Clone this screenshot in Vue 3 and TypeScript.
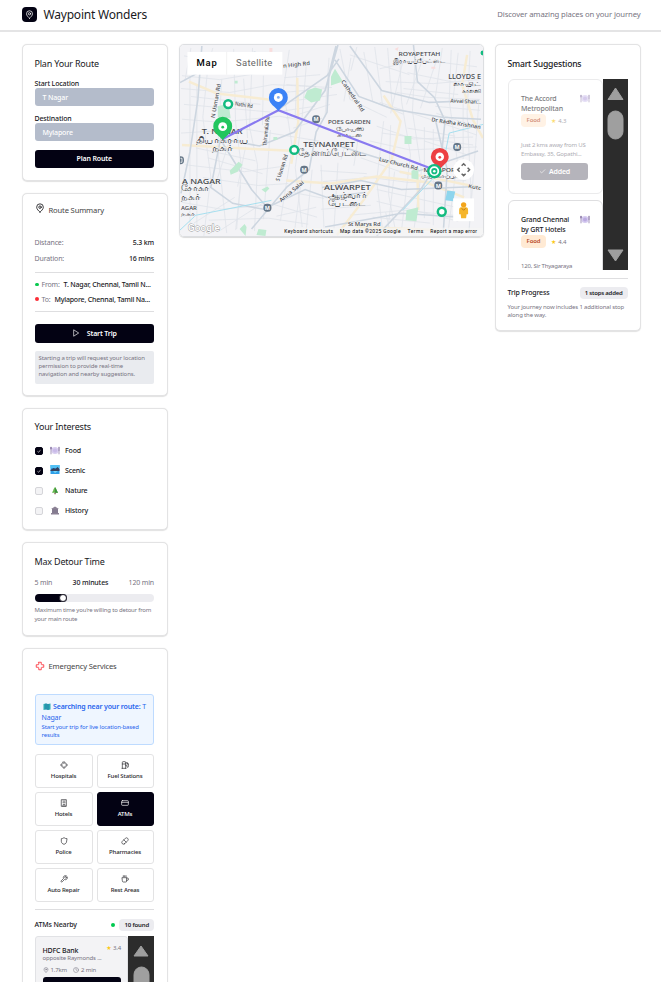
<script setup lang="ts">
import { ref } from 'vue'

interface Interest {
  id: string
  label: string
  checked: boolean
}

interface Service {
  label: string
  paths: string[]
}

interface MapLabel {
  text: string
  x: number
  y: number
  width: number
  size: number
  rotate?: number
}

const interests = ref<Interest[]>([
  { id: 'food', label: 'Food', checked: true },
  { id: 'scenic', label: 'Scenic', checked: true },
  { id: 'nature', label: 'Nature', checked: false },
  { id: 'history', label: 'History', checked: false },
])

const detour = ref(30)
const activeService = ref('ATMs')

const services: Service[] = [
  { label: 'Hospitals', paths: ['M9 3h6v5l1 1h5v6h-5l-1 1v5H9v-5l-1-1H3V9h5l1-1z'] },
  { label: 'Fuel Stations', paths: ['M3 22h12M4 9h10M14 22V4a2 2 0 0 0-2-2H6a2 2 0 0 0-2 2v18', 'M14 13h2a2 2 0 0 1 2 2v2a2 2 0 0 0 4 0V9.8L18 5M14 6h7v5'] },
  { label: 'Hotels', paths: ['M5 2h14v20H5z', 'M9 22v-5h6v5M9 6h.1M15 6h.1M9 11h.1M15 11h.1M12 6v6'] },
  { label: 'ATMs', paths: ['M4 5h16a2 2 0 0 1 2 2v10a2 2 0 0 1-2 2H4a2 2 0 0 1-2-2V7a2 2 0 0 1 2-2z', 'M2 10h20'] },
  { label: 'Police', paths: ['M20 13c0 5-3.500 7.500-8 9-4.500-1.500-8-4-8-9V5c3 0 5-1 8-3 3 2 5 3 8 3z'] },
  { label: 'Pharmacies', paths: ['m10.500 20.500 10-10a5 5 0 0 0-7-7l-10 10a5 5 0 0 0 7 7z', 'm8.500 8.500 7 7'] },
  { label: 'Auto Repair', paths: ['M14.700 6.300a1 1 0 0 0 0 1.400l1.600 1.600a1 1 0 0 0 1.400 0l3.800-3.800a6 6 0 0 1-8 8l-6.900 6.900a2 2 0 0 1-3-3l6.900-6.900a6 6 0 0 1 8-8z'] },
  { label: 'Rest Areas', paths: ['M4 8h13v10a3 3 0 0 1-3 3H7a3 3 0 0 1-3-3z', 'M17 9h2a3 3 0 0 1 0 7h-2M7 2v3M11 2v3M15 2v3'] },
]

const suggestions = [
  { name: ['The Accord', 'Metropolitan'], rating: '4.3', address: ['Just 2 kms away from US', 'Embassy, 35, Gopathi...'], added: true },
  { name: ['Grand Chennai', 'by GRT Hotels'], rating: '4.4', address: ['120, Sir Thyagaraya'], added: false },
]

const mapLabels: MapLabel[] = [
  { text: 'T. NAGAR', x: 201, y: 134, width: 41, size: 7 },
  { text: 'தியாகராய', x: 195, y: 143, width: 53, size: 9.5 },
  { text: 'நகர்', x: 211, y: 151.5, width: 22, size: 9.5 },
  { text: 'TEYNAMPET', x: 303, y: 147, width: 52, size: 8 },
  { text: 'தேனாம்பேட்டை', x: 298, y: 156, width: 68, size: 10 },
  { text: 'A NAGAR', x: 181, y: 184, width: 39, size: 7.5 },
  { text: 'சோகா', x: 180, y: 192, width: 29, size: 9 },
  { text: 'நகர்', x: 180, y: 200.5, width: 20, size: 9 },
  { text: 'AGAR', x: 180, y: 210.5, width: 16, size: 5.5 },
  { text: 'நகர்', x: 180, y: 217, width: 14, size: 6 },
  { text: 'ALWARPET', x: 324, y: 190.5, width: 47, size: 8 },
  { text: 'ஆழ்வார்', x: 328, y: 198.5, width: 39, size: 9.5 },
  { text: 'பேட்டை', x: 328, y: 206.5, width: 38, size: 9.5 },
  { text: 'POES GARDEN', x: 328, y: 124, width: 43, size: 5.5 },
  { text: 'போயஸ்', x: 336, y: 130.5, width: 28, size: 6.5 },
  { text: 'கார்டன்', x: 337, y: 136.5, width: 25, size: 6.5 },
  { text: 'ROYAPETTAH', x: 399, y: 55.5, width: 42, size: 5.5 },
  { text: 'இராயப்பேட்டை', x: 393, y: 62, width: 53, size: 7.5 },
  { text: 'LLOYDS E', x: 449, y: 78.5, width: 33, size: 7 },
  { text: 'லாயிட்', x: 454, y: 85.5, width: 28, size: 7.5 },
  { text: 'காலனி', x: 463, y: 92.5, width: 19, size: 7.5 },
  { text: 'n High Rd', x: 283, y: 67, width: 27, size: 5.5, rotate: -6 },
  { text: 'N Usman Rd', x: 214, y: 118, width: 35, size: 5.5, rotate: -80 },
  { text: 'Nathi Rd', x: 234, y: 105, width: 18, size: 5.5, rotate: 9 },
  { text: 'Thirumalai Rd', x: 266, y: 146, width: 30, size: 5.5, rotate: -84 },
  { text: 'S Usman Rd', x: 279, y: 182, width: 28, size: 5.5, rotate: -72 },
  { text: 'Anna Salai', x: 281, y: 203, width: 30, size: 5.5, rotate: -40 },
  { text: 'Cathedral Rd', x: 341, y: 81, width: 37, size: 5.5, rotate: 56 },
  { text: 'Luz Church Rd', x: 379, y: 161, width: 40, size: 5.5, rotate: 14 },
  { text: 'Dr Radha Krishnan', x: 432, y: 121, width: 50, size: 5.5, rotate: 9 },
  { text: 'Avvai Shan...', x: 451, y: 102, width: 31, size: 5.5, rotate: 3 },
  { text: 'St Marys Rd', x: 348, y: 227, width: 33, size: 5 },
  { text: 'MYLAPORE', x: 424, y: 172.5, width: 36, size: 5 },
  { text: 'மயிலாப்பூர்', x: 422, y: 178.500, width: 38, size: 6 },
  { text: 'Kutc', x: 469, y: 188, width: 13, size: 5, rotate: 12 },
]

const metros = [
  [316, 119], [304, 170], [267, 208.5], [179, 160.5], [458, 147], [439, 186],
]

const rings = [
  [227.5, 103.7], [294, 150], [442.5, 212.5],
]
</script>

<template>
  <div class="app">
    <header class="header">
      <div class="brand">
        <span class="logo">
          <svg viewBox="0 0 24 24" class="stroke"><path d="M12 22c3-3 8-7 8-12a8 8 0 0 0-16 0c0 5 5 9 8 12z" /><circle cx="12" cy="10" r="3" /></svg>
        </span>
        <h1>Waypoint Wonders</h1>
      </div>
      <p>Discover amazing places on your journey</p>
    </header>

    <main class="layout">
      <aside class="column">
        <section class="card plan">
          <h2>Plan Your Route</h2>
          <label>Start Location</label>
          <div class="input">T Nagar</div>
          <label>Destination</label>
          <div class="input second">Mylapore</div>
          <button class="primary">Plan Route</button>
        </section>

        <section class="card summary">
          <div class="title">
            <svg viewBox="0 0 24 24" class="stroke"><path d="M12 22c3-3 8-7 8-12a8 8 0 0 0-16 0c0 5 5 9 8 12z" /><circle cx="12" cy="10" r="3" /></svg>
            <span>Route Summary</span>
          </div>
          <div class="stat"><span>Distance:</span><b>5.3 km</b></div>
          <div class="stat"><span>Duration:</span><b>16 mins</b></div>
          <hr />
          <div class="place from"><i></i><span>From:</span><b>T. Nagar, Chennai, Tamil N...</b></div>
          <div class="place to"><i></i><span>To:</span><b>Mylapore, Chennai, Tamil Na...</b></div>
          <hr class="low" />
          <button class="primary start">
            <svg viewBox="0 0 24 24" class="stroke"><path d="M6 3l14 9-14 9z" /></svg>
            <span>Start Trip</span>
          </button>
          <p class="note">Starting a trip will request your location<br />permission to provide real-time<br />navigation and nearby suggestions.</p>
        </section>

        <section class="card interests">
          <h2>Your Interests</h2>
          <div v-for="item in interests" :key="item.id" class="interest" @click="item.checked = !item.checked">
            <span class="box" :class="{ checked: item.checked }">
              <svg v-if="item.checked" viewBox="0 0 8 8"><path d="M2 4.500l1.300 1L6 3" /></svg>
            </span>
            <svg v-if="item.id === 'food'" class="emoji" viewBox="0 0 10 9">
              <circle cx="5" cy="4.500" r="3.500" fill="#d8cdf0" /><circle cx="5" cy="4.500" r="2.100" fill="#c9bae8" />
              <path d="M1 .8v7.500M.4 1v2h1.200V1M9 .8v7.500M9 1v4" stroke="#8d7ba8" stroke-width=".8" fill="none" />
            </svg>
            <svg v-else-if="item.id === 'scenic'" class="emoji scenic-icon" viewBox="0 0 10 9">
              <path d="M.5 0h9v9h-9z" fill="#2d9fe8" /><path d="M.5 0h9v3h-9z" fill="#52c1f5" />
              <path d="M.5 5l3-2 2 .8 2-1.800 2 2V6h-9z" fill="#35405f" /><path d="M3 6h5L5 8z" fill="#77d4f6" />
            </svg>
            <svg v-else-if="item.id === 'nature'" class="emoji" viewBox="0 0 10 9">
              <path d="M5 1l1.700 2.500-.3.200L8 6.800H2l1.600-3.100-.3-.2z" fill="#63b64a" /><path d="M5 1l3 5.800H5z" fill="#3d9140" /><path d="M4.400 6.800h1.300v1.400H4.400z" fill="#785345" />
            </svg>
            <svg v-else class="emoji" viewBox="0 0 10 9">
              <path d="M5 .5L9 3H1zM1 7h8v1.400H1z" fill="#8c8295" /><path d="M2 3h6v4H2z" fill="#b5adbd" /><path d="M3 3v4M5 3v4M7 3v4" stroke="#554a62" stroke-width="1" />
            </svg>
            <span>{{ item.label }}</span>
          </div>
        </section>

        <section class="card detour">
          <h2>Max Detour Time</h2>
          <div class="range"><span>5 min</span><b>{{ detour }} minutes</b><span>120 min</span></div>
          <div class="track"><div class="fill" :style="{ width: 8 + ((detour - 5) / 115) * 90 + '%' }"><i></i></div></div>
          <p>Maximum time you're willing to detour from<br />your main route</p>
        </section>

        <section class="card emergency">
          <div class="title red">
            <svg viewBox="0 0 24 24" class="stroke"><path d="M9 3h6v5l1 1h5v6h-5l-1 1v5H9v-5l-1-1H3V9h5l1-1z" /></svg>
            <span>Emergency Services</span>
          </div>
          <div class="notice">
            <div>
              <svg viewBox="0 0 8 7"><path d="M.5 1L3 .5l2 .5 2.500-.5v6L5 7l-2-.5-2.500.5z" fill="#2caab4" /><path d="M3 .5v6M5 1v6" stroke="#246fa4" stroke-width=".7" /></svg>
              <b>Searching near your route:</b> T<br />Nagar
            </div>
            <p>Start your trip for live location-based<br />results</p>
          </div>
          <div class="services">
            <button v-for="s in services" :key="s.label" :class="{ active: s.label === activeService }" @click="activeService = s.label">
              <svg viewBox="0 0 24 24" class="stroke"><path v-for="p in s.paths" :key="p" :d="p" /></svg>
              <span>{{ s.label }}</span>
            </button>
          </div>
          <hr />
          <div class="nearby"><b>ATMs Nearby</b><i></i><span class="badge">10 found</span></div>
          <div class="results">
            <div class="bank">
              <div class="bank-head"><b>HDFC Bank</b><span><em>★</em> 3.4</span></div>
              <p>opposite Raymonds ...</p>
              <div class="meta">
                <svg viewBox="0 0 24 24" class="stroke"><path d="M12 22c3-3 8-7 8-12a8 8 0 0 0-16 0c0 5 5 9 8 12z" /><circle cx="12" cy="10" r="3" /></svg>
                <span>1.7km</span>
                <svg viewBox="0 0 24 24" class="stroke clock"><circle cx="12" cy="12" r="10" /><path d="M12 6v6l4 2" /></svg>
                <span>2 min</span>
              </div>
              <button class="primary">Add as Stop</button>
            </div>
            <div class="scrollbar">
              <svg viewBox="0 0 26 60"><path d="M13 10L20 20H6z" /><rect x="6" y="31" width="15" height="40" rx="7.500" /></svg>
            </div>
          </div>
        </section>
      </aside>

      <section class="map">
        <svg viewBox="179 44 305 193" preserveAspectRatio="none">
          <rect x="179" y="44" width="305" height="193" fill="#f3f3f6" />
          <g class="minor">
            <path d="M181 75l38 4 42-7M180 88l49 4 43-8 60 3M183 104l90 8 42-6M181 119l38 3 60-6 40 7M180 133l65-4 74 12M184 165l60 7 43-6M202 178l56 8 30-2M181 203l40 7 52-5 44 13M208 221l60-2 40 6M233 48l2 75 6 45-5 62M252 47l-3 80 8 38-3 67M207 67l-5 50 8 60-7 60M221 79l-4 70 9 85M289 49l-6 40 9 58-12 75M306 66l-4 50-7 52 7 60M340 48l10 51 37 18M364 51l9 50 31 13M380 68l40-9 58 7M386 81l48 2 46-4M397 92l33 5 51 2M377 126l37 13 60-2M370 141l40 9 68-3M364 177l46 6 57-2M350 216l55-5 67 7M400 49l2 52 9 54-9 76M416 50l-3 61 9 60-8 64M452 49l-2 51 8 60-9 72M471 50l-3 62 4 81-2 40M384 121l-7 60 6 51M391 125l-2 70 7 37" />
            <path d="M189 75v155M196 84v145M243 78l4 60M263 75l-1 50M270 130l-7 90M329 57l-4 60M351 57l-7 44M425 127v92M434 129v97M464 100v108M480 100l-10 132M321 165l3 65M338 163l-4 67M320 171l47 3M323 182l46-4M321 210l50-4M350 54l60 20M380 102l98 33M190 96l70 8M207 158l55 16M195 148l60 13M424 56l-17 48M437 60l-16 48M193 224l41-26M220 231l42-27M377 190l80 18M377 202l82 20M425 141l46 15" />
            <path d="M284 77l36-3M286 84l30 2M283 92l42-4M289 101l48-7M286 118l44-14M293 128l29-10M297 60l-2 55M302 174l-8 60M312 170l-6 62M287 192l37 7M276 217l40-9M346 142l-5 18M358 141l-4 25M361 158l48 17M382 133l92 12M373 218l58 6M386 213l5 22M395 172l-7 60M403 62l-12 51M357 46l-6 24M375 46l8 60M388 47l5 64M443 47l-7 50M459 52l-5 46M408 72l68 14M404 88l55 6M436 106l45 4M437 113l38 13M408 128l48 8M240 186l-5 45M228 143l-12 38M245 147l-8 40M183 55l28 5M190 47l-6 33M212 47l-7 27" />
          </g>
          <g class="yellow">
            <path d="M188 81l28 12 68 8M181 145l72 4 43 2M297 77l1 45-7 42M286 181l45 3 46-7 54 6M384 95l17 26-9 39-27 39-28 37M400 172l42 8 39 8M468 54l-5 30 11 36 10 18M356 228l82 3M427 183l38 15M418 176l1 35" />
          </g>
          <g class="roads">
            <path d="M179 82l33-18 43-13M201 45l-4 54-8 53-9 42M220 140l31 50 19 22M220 139l39 7 35-14 31-42 13-46M277 110l50-35 12-17M336 45l-7 28-2 39-11 20-7 38-22 17-36 43M221 133l-11 55 22 16 31 6 42-20 22 8 38-5M335 59l24 37 35 13 49 8 39 2M350 45l32 45 48 12 50-2M414 44l4 37 17 16 11 24M446 119l-4 38-20 32-26 28-19 20M336 145l45 14 39 12 59-20M436 119l12 51-4 64M322 188l39-7 41 9 77-3M325 228l77-14 73 5" />
          </g>
          <g class="water"><path d="M179 231l16-15 76-15M403 211l40-42 7-36 35-9" /></g>
          <g fill="#bfebd1">
            <path d="M217 106l11-3 2 15-13-1zM307 90l8-3 7 2-2 11-9 2-7-5zM229 171l9-9 4 3-5 7-7 3zM331 76l4-8 8 13-12 4zM405 136h7v8h-7zM407 211l12-3-2 14-11-1zM412 171l7-3v12l-7-1zM239 230l5-5 2 3-1 9zM258 230l8 1-1 6-9-1zM234 80h3v3h-3zM261 190l6-3 2 2-4 4zM273 137h4v3h-4zM203 53l7-1-3 6z" />
          </g>
          <g fill="#f9dddd"><path d="M269 47h3v5h-3zM395 48l4-2-1 4zM432 66h4v2h-4z" /></g>
          <path d="M448 191l8 1-2 10-8-1z" fill="#8ed5ed" />

          <g class="map-text">
            <text v-for="l in mapLabels" :key="l.text + l.x + l.y" :x="l.x" :y="l.y" :font-size="l.size" :textLength="l.width" lengthAdjust="spacingAndGlyphs" :transform="l.rotate ? `rotate(${l.rotate} ${l.x} ${l.y})` : undefined">{{ l.text }}</text>
          </g>

          <g v-for="m in metros" :key="m[0]">
            <rect :x="m[0] - 4" :y="m[1] - 4" width="8" height="8" rx="3.500" fill="#657687" />
            <text v-if="m[0] > 180" :x="m[0]" :y="m[1] + 2" font-size="5.500" font-weight="bold" text-anchor="middle" fill="#fff">M</text>
            <path v-else d="M179.500 158.500h1.500v4h-1.500" fill="none" stroke="#fff" stroke-width=".8" />
          </g>

          <path d="M222 139l56-29 157 60" fill="none" stroke="#897af0" stroke-width="2.200" />
          <g v-for="r in rings" :key="r[0]">
            <circle :cx="r[0]" :cy="r[1]" r="5.200" fill="#13bb80" /><circle :cx="r[0]" :cy="r[1]" r="2.700" fill="#fff" />
          </g>
          <path d="M222 140c-3-4-9.500-7-9.500-14a9.500 9.500 0 0 1 19 0c0 7-6.500 10-9.500 14z" fill="#22c55e" />
          <circle cx="222" cy="126.500" r="4.500" fill="#fff" /><circle cx="222" cy="127" r="1.400" fill="#22c55e" />
          <path d="M278 111c-3-5-9.500-7-9.500-14a9.500 9.500 0 0 1 19 0c0 7-6.500 9-9.500 14z" fill="#3b82f6" />
          <circle cx="278" cy="97" r="4.500" fill="#fff" /><circle cx="278" cy="97" r="1.400" fill="#82aef4" />
          <path d="M440.500 170c-3-5-9-7-9-13a9 9 0 0 1 18 0c0 6-6 8-9 13z" fill="#ed4043" />
          <circle cx="440.500" cy="157" r="4.300" fill="#fff" /><circle cx="440.500" cy="157.500" r="1.400" fill="#ed4043" />
          <circle cx="435" cy="171.500" r="7.300" fill="#13bb80" /><circle cx="435" cy="171.500" r="4" fill="#13bb80" stroke="#fff" stroke-width="1.800" /><circle cx="435" cy="171.500" r="1.300" fill="#fff" />
          <circle cx="484" cy="52" r="2.500" fill="#13bb80" />

          <circle cx="464.500" cy="170" r="10.500" fill="#fff" />
          <path d="M462.500 166l2-2 2 2M462.500 174l2 2 2-2M460.500 168l-2 2 2 2M468.500 168l2 2-2 2" fill="none" stroke="#666" stroke-width="1.500" />
          <rect x="454" y="199" width="21" height="23" fill="#fff" />
          <circle cx="464.500" cy="205.500" r="2.700" fill="#f3a51b" /><path d="M462 208h5q2 0 2 3v4h-1.500l-.5 4h-5l-.5-4H460v-4q0-3 2-3z" fill="#f5b52b" /><path d="M462.500 209l2 2 2-2" stroke="#bd7b18" fill="none" />

          <rect x="186.500" y="51" width="95.500" height="23" fill="#fff" />
          <path d="M226 51v23" stroke="#eee" stroke-width=".8" />
          <text x="195.500" y="65.500" class="map-tab bold" textLength="20.500">Map</text>
          <text x="235.500" y="65.500" class="map-tab" fill="#666" textLength="36.500">Satellite</text>
          <text x="187" y="231.500" class="google" textLength="32">Google</text>
          <rect x="283" y="228.500" width="201" height="8" fill="#f5f5f5" opacity=".7" />
          <g class="credits">
            <text x="284" y="233.500" textLength="49">Keyboard shortcuts</text>
            <text x="340" y="233.500" textLength="61">Map data ©2025 Google</text>
            <text x="408" y="233.500" textLength="16">Terms</text>
            <text x="431" y="233.500" textLength="47">Report a map error</text>
          </g>
        </svg>
      </section>

      <aside class="card smart">
        <h2>Smart Suggestions</h2>
        <div class="viewport">
          <div class="list">
            <article v-for="s in suggestions" :key="s.rating" :class="{ added: s.added }">
              <div class="spot">
                <h3>{{ s.name[0] }}<br />{{ s.name[1] }}</h3>
                <svg viewBox="0 0 10 9"><circle cx="5" cy="4.500" r="3.500" fill="#d5caf0" /><circle cx="5" cy="4.500" r="2" fill="#bbaae0" /><path d="M1 .8v7.500M.4 1v2h1.200V1M9 .8v7.500M9 1v4" stroke="#8d7ba8" stroke-width=".8" fill="none" /></svg>
              </div>
              <div class="tags"><span>Food</span><em>★</em>{{ s.rating }}</div>
              <p><template v-for="line in s.address" :key="line">{{ line }}<br /></template></p>
              <button v-if="s.added">
                <svg viewBox="0 0 24 24" class="stroke"><path d="M20 6L9 17l-5-5" /></svg><span>Added</span>
              </button>
            </article>
          </div>
          <div class="scrollbar">
            <svg viewBox="0 0 25 191"><path d="M12.500 9L20 20.500H5z" /><rect x="5" y="32" width="15" height="28" rx="7.500" /><path d="M12.500 182L20 171H5z" /></svg>
          </div>
        </div>
        <div class="progress"><b>Trip Progress</b><span class="badge">1 stops added</span></div>
        <p class="progress-note">Your journey now includes 1 additional stop<br />along the way.</p>
      </aside>
    </main>
  </div>
</template>

<style>
body {
  margin: 0;
  overflow: hidden;
  background: #fff;
}
</style>

<style scoped>
* {
  box-sizing: border-box;
}

.app {
  width: 661px;
  height: 982px;
  overflow: hidden;
  font-family: 'Noto Sans', 'Open Sans', sans-serif;
  font-size: 7px;
  color: #19191d;
  letter-spacing: -0.15px;
}

h1,
h2,
h3,
p {
  margin: 0;
  font-weight: 400;
}

b {
  font-weight: 500;
}

button {
  padding: 0;
  border: 0;
  font: inherit;
  letter-spacing: inherit;
}

em {
  color: #fbc91b;
  font-style: normal;
  font-family: 'DejaVu Sans', sans-serif;
}

svg {
  display: block;
  flex: none;
}

.stroke {
  fill: none;
  stroke: currentColor;
  stroke-width: 2;
  stroke-linejoin: round;
  stroke-linecap: round;
}

hr {
  width: 100%;
  height: 1px;
  margin: 0;
  border: 0;
  background: #dedee0;
}

.header {
  display: flex;
  align-items: center;
  justify-content: space-between;
  height: 32px;
  padding: 0 20.5px 2px 22px;
  border-bottom: 2px solid #e4e4e5;
}

.header p {
  color: #777482;
  font-size: 7.7px;
  letter-spacing: -0.12px;
}

.brand {
  display: flex;
  align-items: center;
  gap: 6.5px;
}

.logo {
  display: flex;
  align-items: center;
  justify-content: center;
  width: 15px;
  height: 15px;
  border-radius: 4px;
  background: #030213;
  color: #fff;
}

.logo svg {
  width: 9px;
}

h1 {
  font-size: 12px;
  letter-spacing: -0.2px;
}

.layout {
  display: grid;
  grid-template-columns: 145.5px 305px 146.5px;
  gap: 11px;
  align-items: start;
  padding: 12px 20px 0 22px;
}

.column {
  display: flex;
  flex-direction: column;
  gap: 12px;
}

.card {
  display: flex;
  flex-direction: column;
  padding: 0 12px;
  border: 1.5px solid #e3e3e4;
  border-radius: 5px;
  background: #fff;
  box-shadow: 0 0.5px 1px rgba(0, 0, 0, 0.12);
}

.column .card {
  padding: 0 12.5px 0 11.5px;
}

h2 {
  font-size: 9px;
  line-height: 12px;
  letter-spacing: -0.2px;
}

.primary {
  display: flex;
  align-items: center;
  justify-content: center;
  height: 18px;
  border-radius: 3px;
  background: #030213;
  color: #fff;
  font-size: 7px;
  font-weight: 600;
}

.plan {
  height: 136.5px;
}

.plan h2 {
  margin-top: 13px;
}

.plan label {
  margin-top: 9px;
  font-size: 7px;
  font-weight: 500;
  line-height: 9px;
}

.input {
  height: 18px;
  padding-left: 8px;
  border-radius: 3px;
  background: #b4bccb;
  color: #fff;
  font-weight: 500;
  line-height: 19px;
}

.plan .input + label {
  margin-top: 8px;
}

.plan .primary {
  margin-top: 8.5px;
}

.summary {
  height: 203.5px;
}

.title {
  display: flex;
  gap: 4px;
  height: 14px;
  margin-top: 10px;
  font-size: 7.6px;
  line-height: 14px;
  letter-spacing: -0.15px;
}

.title svg {
  width: 10px;
  height: 10px;
}

.title span {
  color: #444;
}

.summary .title {
  margin: 9.5px 0 18px;
}

.stat {
  display: flex;
  justify-content: space-between;
  height: 16px;
  line-height: 16px;
}

.stat span,
.place span {
  color: #777482;
}

.summary hr {
  margin: 4.5px 0 4px;
}

.place {
  display: flex;
  align-items: center;
  gap: 4px;
  height: 15px;
  letter-spacing: -0.19px;
  white-space: nowrap;
}

.place i {
  width: 4px;
  height: 3px;
  margin-right: -1px;
  border-radius: 2px;
  background: #09c950;
}

.to i {
  height: 4px;
  background: #fb2c36;
}

.summary .low {
  margin: 4.5px 0 11.5px;
}

.start {
  flex: none;
  gap: 7px;
  height: 19px;
}

.start svg {
  width: 8px;
}

.note {
  height: 33px;
  margin-top: 8px;
  padding: 3.5px 4px;
  border-radius: 2px;
  background: #e9ebef;
  color: #777482;
  font-size: 6px;
  line-height: 8px;
  letter-spacing: -0.12px;
  white-space: nowrap;
}

.interests {
  height: 122px;
}

.interests h2 {
  margin: 12px 0 7.5px;
}

.interest {
  display: flex;
  align-items: center;
  height: 20px;
  font-weight: 500;
}

.box {
  width: 8px;
  height: 8px;
  border: 1px solid #d5d5d9;
  border-radius: 2px;
  background: #f3f3f5;
}

.box.checked {
  border-color: #030213;
  background: #030213;
}

.box path {
  fill: none;
  stroke: #fff;
  stroke-width: 0.9;
}

.emoji {
  width: 10px;
  height: 9px;
  margin: 0 5.5px 0 7px;
}

.scenic-icon {
  margin-bottom: 3px;
}

.detour {
  height: 94px;
}

.detour h2 {
  margin: 13px 0 9px;
}

.range {
  display: flex;
  justify-content: space-between;
  line-height: 12px;
  color: #777482;
}

.range b {
  color: #19191d;
}

.track {
  height: 8px;
  margin-top: 4.5px;
  border-radius: 4px;
  background: #ececf0;
}

.fill {
  display: flex;
  justify-content: flex-end;
  height: 8px;
  border-radius: 4px;
  background: #030213;
}

.fill i {
  width: 8px;
  height: 8px;
  border: 1.5px solid #25232f;
  border-radius: 50%;
  background: #fff;
}

.detour p {
  margin-top: 4px;
  color: #777482;
  font-size: 6px;
  line-height: 9px;
  letter-spacing: -0.19px;
  white-space: nowrap;
}

.emergency {
  height: 420px;
}

.red svg {
  margin-top: 2px;
  color: #fb2c36;
}

.notice {
  height: 51px;
  margin-top: 21px;
  padding: 6px 6px 0;
  border: 1px solid #bedbff;
  border-radius: 3px;
  background: #eff6ff;
  color: #2865ed;
  line-height: 11px;
  white-space: nowrap;
}

.notice svg {
  display: inline-block;
  width: 8px;
  height: 7px;
  margin: 0 2.5px 0 1px;
  vertical-align: -1px;
}

.notice b {
  font-weight: 600;
  letter-spacing: -0.14px;
}

.notice p {
  font-size: 6px;
  line-height: 8px;
}

.services {
  display: grid;
  grid-template-columns: 58px 57px;
  gap: 4px;
  margin: 9px 0 7px;
}

.services button {
  display: flex;
  flex-direction: column;
  align-items: center;
  gap: 3px;
  height: 34px;
  padding-top: 6px;
  border: 1.5px solid #e3e3e4;
  border-radius: 3px;
  background: #fff;
  color: #29292d;
  font-size: 6px;
  font-weight: 500;
  line-height: 9px;
}

.services svg {
  width: 8px;
  height: 8px;
}

.services .active {
  border-color: #030213;
  background: #030213;
  color: #fff;
}

.nearby {
  display: flex;
  align-items: center;
  height: 12px;
  margin: 8.5px 0 5.5px;
}

.nearby i {
  width: 4px;
  height: 4px;
  margin: 0 4px 0 auto;
  border-radius: 50%;
  background: #00c950;
}

.badge {
  height: 12px;
  padding: 0 5px;
  border-radius: 4px;
  background: #ececf0;
  font-size: 6px;
  font-weight: 600;
  line-height: 12px;
}

.results {
  display: flex;
  height: 80px;
}

.bank {
  flex: 1;
  padding: 8px 6px 0 7px;
  border: 1px solid #e1e2e5;
  border-radius: 3px 3px 0 0;
  background: #f3f3f5;
}

.bank-head {
  display: flex;
  justify-content: space-between;
  height: 9px;
  line-height: 12px;
}

.bank-head span {
  font-size: 6px;
  line-height: 6px;
  color: #777482;
}

.bank p {
  color: #777482;
  font-size: 6px;
  line-height: 8px;
}

.meta {
  display: flex;
  align-items: center;
  gap: 2px;
  height: 15px;
  color: #777482;
  font-size: 6px;
}

.meta svg {
  width: 6px;
}

.meta .clock {
  margin-left: 4px;
}

.bank .primary {
  width: 100%;
  height: 16px;
  font-size: 6px;
}

.scrollbar {
  width: 26px;
  background: #2c2c2c;
}

.scrollbar svg {
  width: 100%;
  fill: #9f9f9f;
  stroke: #9f9f9f;
  stroke-linejoin: round;
}

.map {
  height: 193px;
  overflow: hidden;
  border: 1px solid #dcdee1;
  border-radius: 5px;
  box-shadow: 0 0.5px 1px rgba(0, 0, 0, 0.15);
}

.map svg {
  width: 100%;
  height: 100%;
}

.map text {
  letter-spacing: 0;
}

.minor {
  fill: none;
  stroke: #dfe3ea;
  stroke-width: 0.8;
}

.roads {
  fill: none;
  stroke: #cdd6e0;
  stroke-width: 1.6;
}

.yellow {
  fill: none;
  stroke: #f7ecd3;
  stroke-width: 2.5;
}

.water {
  fill: none;
  stroke: #a5dfef;
  stroke-width: 1;
}

.map-text {
  fill: #45484d;
  stroke: #f3f4f6;
  stroke-width: 0.8;
  paint-order: stroke;
  font-weight: 500;
}

.map-tab {
  font-family: Roboto, sans-serif;
  font-size: 9.5px;
}

.bold {
  font-weight: 500;
}

.google {
  fill: #fff;
  stroke: #999;
  stroke-width: 0.8;
  paint-order: stroke;
  font: 500 10px Roboto, sans-serif;
}

.credits {
  font: 5px Roboto, sans-serif;
}

.smart {
  height: 287px;
  padding-right: 12.5px;
}

.smart h2 {
  margin: 13px 0 9px;
  font-size: 8.6px;
  font-weight: 500;
}

.viewport {
  display: flex;
  height: 191px;
  overflow: hidden;
}

.list {
  flex: 1;
}

.smart .scrollbar {
  width: 25px;
}

article {
  height: 115px;
  margin-bottom: 6px;
  padding: 14px 12px 0 12.5px;
  border: 1.5px solid #dedee0;
  border-radius: 6px;
}

.added {
  opacity: 0.6;
}

.spot {
  display: flex;
  justify-content: space-between;
  white-space: nowrap;
}

h3 {
  font-size: 7px;
  font-weight: 500;
  line-height: 9.5px;
}

.spot svg {
  width: 10px;
  height: 9px;
}

.tags {
  display: flex;
  align-items: center;
  height: 13px;
  margin-top: 1px;
  color: #777482;
  font-size: 6px;
}

.tags span {
  width: 25px;
  margin-right: 5px;
  border-radius: 4px;
  background: #ffead4;
  color: #b84a2a;
  font-weight: 600;
  line-height: 13px;
  text-align: center;
}

.tags em {
  margin-right: 2px;
}

article p {
  margin-top: 14px;
  color: #777482;
  font-size: 6px;
  line-height: 9px;
  letter-spacing: -0.2px;
  white-space: nowrap;
}

article button {
  display: flex;
  align-items: center;
  justify-content: center;
  gap: 3px;
  width: 67px;
  height: 17px;
  margin-top: 4px;
  border-radius: 3px;
  background: #85838e;
  color: #fff;
  font-weight: 600;
}

article button svg {
  width: 7px;
}

.progress {
  display: flex;
  align-items: center;
  justify-content: space-between;
  height: 28px;
  margin-top: 8px;
  border-top: 1px solid #dedee0;
}

.progress .badge {
  letter-spacing: -0.22px;
}

.progress-note {
  margin-top: -3px;
  color: #777482;
  font-size: 6px;
  line-height: 8px;
  white-space: nowrap;
}
</style>
